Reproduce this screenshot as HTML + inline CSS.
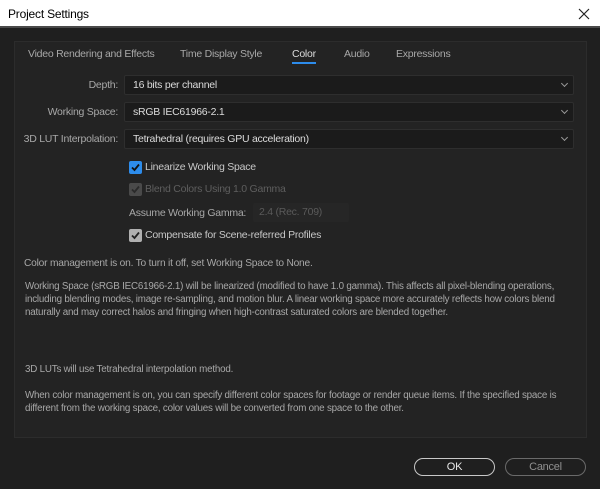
<!DOCTYPE html>
<html><head><style>
*{margin:0;padding:0;box-sizing:border-box}
body{width:600px;height:489px;background:#1f1f1f;font-family:"Liberation Sans",sans-serif;color:#b8b8b8;position:relative;overflow:hidden;font-size:10.5px;letter-spacing:-0.25px}
.title{position:absolute;left:0;top:0;width:600px;height:28px;background:#fff;border-bottom:2px solid #4a4a4a;color:#000;font-size:12px;letter-spacing:-0.2px}
.title span{position:absolute;left:8px;top:7px}
.a{position:absolute;white-space:nowrap}
.panel{position:absolute;left:14px;top:41px;width:573px;height:397px;background:#232323;border:1px solid #2c2c2c}
.dd{position:absolute;left:124px;width:450px;height:20px;background:#1b1b1b;border:1px solid #2e2e2e;border-radius:2px;color:#dcdcdc;padding:3px 0 0 8px;white-space:nowrap}
.dd:after{content:"";position:absolute;right:6px;top:5px;width:4px;height:4px;border-right:1px solid #999;border-bottom:1px solid #999;transform:rotate(45deg)}
.lbl{position:absolute;text-align:right;width:118px;left:0;color:#a8a8a8;white-space:nowrap}
.cb{position:absolute;left:129px;width:13px;height:13px;border-radius:2px}
.cb svg{position:absolute;left:1px;top:1px}
.p{position:absolute;left:25px;font-size:9.8px;line-height:13px;color:#a8a8a8;width:580px;letter-spacing:-0.2px;white-space:nowrap}
.btn{position:absolute;top:458px;width:81px;height:18px;border:1.5px solid #8a8a8a;border-radius:9px;text-align:center;font-size:11px;padding-top:2px}
</style></head><body>
<div class="title"><span>Project Settings</span>
<svg style="position:absolute;left:578px;top:8px" width="12" height="12"><path d="M1 1L11 11M11 1L1 11" stroke="#222" stroke-width="1.2"/></svg></div>
<div class="panel"></div>
<div class="a" style="left:28px;top:48px;color:#a8a8a8">Video Rendering and Effects</div>
<div class="a" style="left:180px;top:48px;color:#a8a8a8">Time Display Style</div>
<div class="a" style="left:292px;top:48px;color:#dcdcdc">Color</div>
<div class="a" style="left:292px;top:62px;width:24px;height:2px;background:#2d8ceb"></div>
<div class="a" style="left:344px;top:48px;color:#a8a8a8">Audio</div>
<div class="a" style="left:396px;top:48px;color:#a8a8a8">Expressions</div>
<div class="lbl" style="top:79px">Depth:</div>
<div class="dd" style="top:75px">16 bits per channel</div>
<div class="lbl" style="top:106px">Working Space:</div>
<div class="dd" style="top:102px">sRGB IEC61966-2.1</div>
<div class="lbl" style="top:133px">3D LUT Interpolation:</div>
<div class="dd" style="top:129px">Tetrahedral (requires GPU acceleration)</div>
<div class="cb" style="top:161px;background:#2d8ceb"><svg width="11" height="11"><path d="M2 5.5L4.5 8L9 2.5" stroke="#111" stroke-width="1.8" fill="none"/></svg></div>
<div class="a" style="left:145px;top:161px;color:#c8c8c8">Linearize Working Space</div>
<div class="cb" style="top:183px;background:#4a4a4a"><svg width="11" height="11"><path d="M2 5.5L4.5 8L9 2.5" stroke="#2a2a2a" stroke-width="1.8" fill="none"/></svg></div>
<div class="a" style="left:145px;top:183px;color:#5e5e5e">Blend Colors Using 1.0 Gamma</div>
<div class="a" style="left:129px;top:207px;color:#a8a8a8">Assume Working Gamma:</div>
<div class="a" style="left:253px;top:203px;width:96px;height:19px;background:#262626;border-radius:2px;color:#5a5a5a;padding:3px 0 0 6px">2.4 (Rec. 709)</div>
<div class="cb" style="top:229px;background:#b0b0b0"><svg width="11" height="11"><path d="M2 5.5L4.5 8L9 2.5" stroke="#222" stroke-width="1.8" fill="none"/></svg></div>
<div class="a" style="left:145px;top:229px;color:#c8c8c8">Compensate for Scene-referred Profiles</div>
<div class="p" style="left:24px;top:257px;font-size:10.2px">Color management is on. To turn it off, set Working Space to None.</div>
<div class="p" style="top:280px">Working Space (sRGB IEC61966-2.1) will be linearized (modified to have 1.0 gamma). This affects all pixel-blending operations,<br>including blending modes, image re-sampling, and motion blur. A linear working space more accurately reflects how colors blend<br>naturally and may correct halos and fringing when high-contrast saturated colors are blended together.</div>
<div class="p" style="top:363px">3D LUTs will use Tetrahedral interpolation method.</div>
<div class="p" style="top:389px">When color management is on, you can specify different color spaces for footage or render queue items. If the specified space is<br>different from the working space, color values will be converted from one space to the other.</div>
<div class="btn" style="left:414px;color:#e8e8e8;border-color:#c8c8c8">OK</div>
<div class="btn" style="left:505px;color:#909090;border-color:#6a6a6a">Cancel</div>
</body></html>
